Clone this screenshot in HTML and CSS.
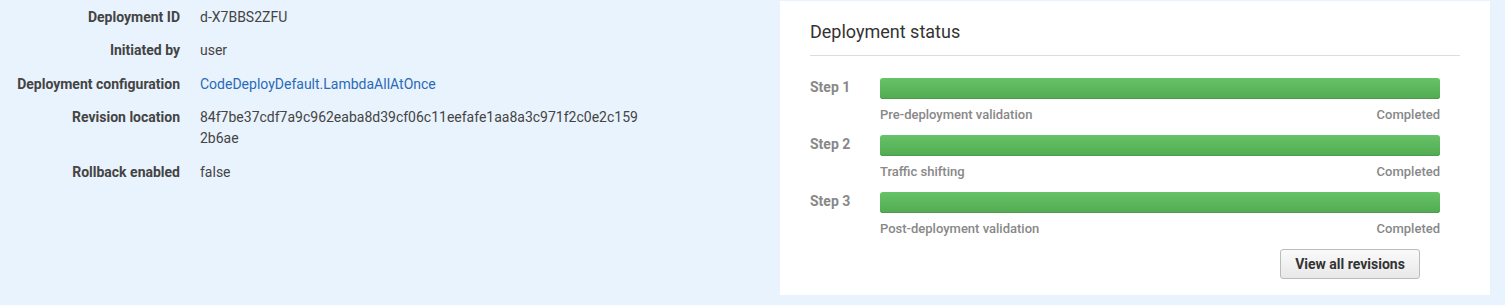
FILE: index.html
```html
<!DOCTYPE html>
<html lang="en">
  <head>
    <meta charset="UTF-8" />
    <meta name="viewport" content="width=device-width, initial-scale=1.0" />
    <title>Deployment details</title>
    <link rel="stylesheet" href="styles.css">
  </head>
  <body>
    <div class="page">
      <div class="details">
        <div class="label">Deployment ID</div>
        <div class="value">d-X7BBS2ZFU</div>
        <div class="label">Initiated by</div>
        <div class="value">user</div>
        <div class="label">Deployment configuration</div>
        <div class="value"><a href="#" class="link">CodeDeployDefault.LambdaAllAtOnce</a></div>
        <div class="label">Revision location</div>
        <div class="value">84f7be37cdf7a9c962eaba8d39cf06c11eefafe1aa8a3c971f2c0e2c159<br />2b6ae</div>
        <div class="label">Rollback enabled</div>
        <div class="value">false</div>
      </div>

      <div class="panel">
        <h2 class="panel-title">Deployment status</h2>
        <div class="steps">
          <div class="step">
            <div class="step-name">Step 1</div>
            <div class="bar"></div>
            <div class="step-info">
              <span>Pre-deployment validation</span>
              <span>Completed</span>
            </div>
          </div>
          <div class="step">
            <div class="step-name">Step 2</div>
            <div class="bar"></div>
            <div class="step-info">
              <span>Traffic shifting</span>
              <span>Completed</span>
            </div>
          </div>
          <div class="step">
            <div class="step-name">Step 3</div>
            <div class="bar"></div>
            <div class="step-info">
              <span>Post-deployment validation</span>
              <span>Completed</span>
            </div>
          </div>
        </div>
        <div class="actions">
          <button class="btn">View all revisions</button>
        </div>
      </div>
    </div>
  </body>
</html>
```

FILE: styles.css
```css
body {
  margin: 0;
  background-color: #e9f3fd;
  font-family: Roboto, "Liberation Sans", Arial, sans-serif;
  font-size: 14px;
  color: #444;
}
.page {
  display: flex;
  align-items: flex-start;
  height: 305px;
}
.details {
  flex: 1;
  display: grid;
  grid-template-columns: 180px 1fr;
  column-gap: 20px;
  row-gap: 12.4px;
  padding-top: 7px;
  line-height: 21px;
}
.label {
  text-align: right;
  font-weight: bold;
  color: #444;
}
.value {
  color: #444;
}
.link {
  color: #2a6ab8;
  text-decoration: none;
}
.panel {
  width: 650px;
  height: 294px;
  margin: 1px 15px 0 0;
  padding: 0 30px;
  background-color: #fff;
}
.panel-title {
  margin: 0;
  padding-top: 19px;
  padding-bottom: 11px;
  font-size: 18px;
  font-weight: normal;
  line-height: 24px;
  color: #333;
  border-bottom: 1px solid #ddd;
}
.steps {
  padding: 22px 20px 0 0;
}
.step {
  display: grid;
  grid-template-columns: 70px 1fr;
  margin-bottom: 11px;
}
.step-name {
  font-weight: bold;
  color: #888;
  line-height: 19px;
}
.bar {
  height: 21px;
  border-radius: 3px;
  background: linear-gradient(#67c367, #52ab52);
  box-shadow: inset 0 -1px 0 #4a9c4a;
}
.step-info {
  grid-column: 2;
  display: flex;
  justify-content: space-between;
  margin-top: 7px;
  font-size: 13px;
  font-weight: 500;
  line-height: 18px;
  color: #888;
}
.actions {
  display: flex;
  justify-content: flex-end;
  padding-right: 40px;
}
.btn {
  width: 140px;
  height: 30px;
  font-family: inherit;
  font-size: 14px;
  font-weight: bold;
  color: #333;
  background: linear-gradient(#fafafa, #e8e8e8);
  border: 1px solid #bbb;
  border-radius: 3px;
}
```
